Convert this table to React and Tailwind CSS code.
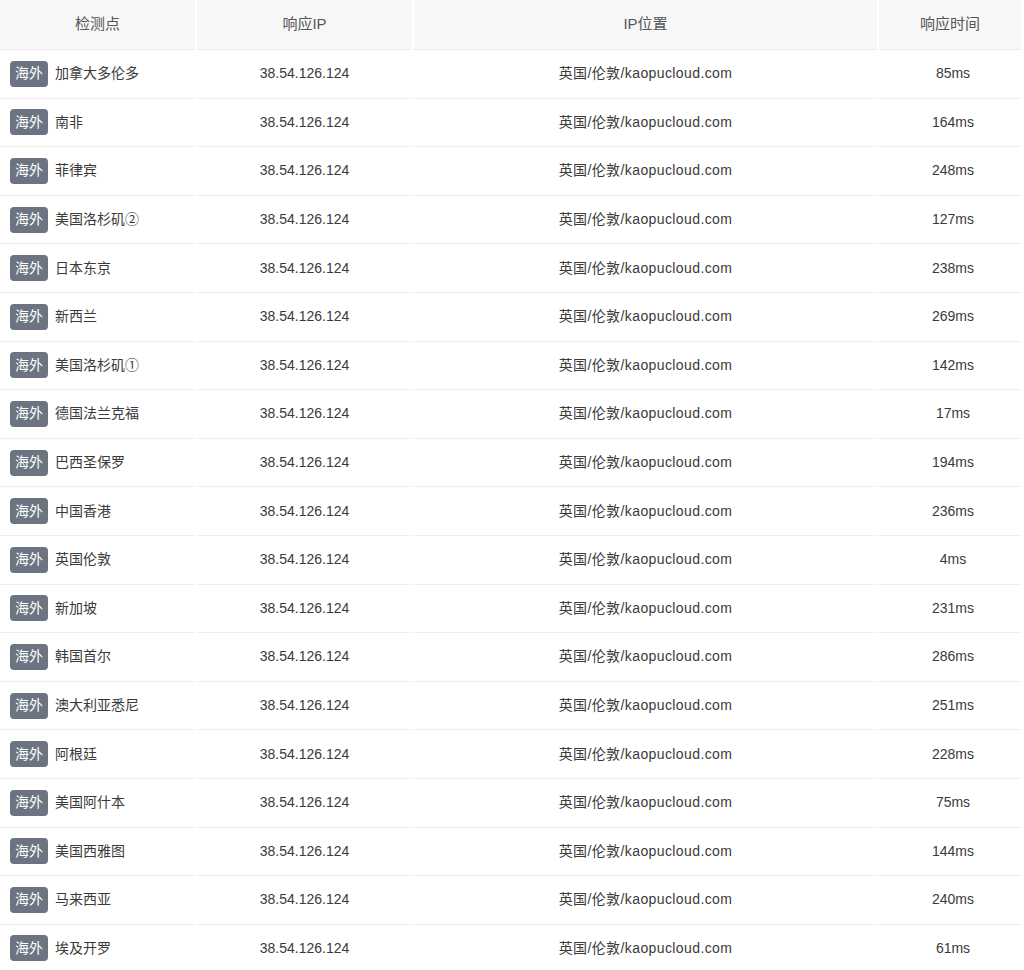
const ROWS = [
  ["加拿大多伦多", "85ms"],
  ["南非", "164ms"],
  ["菲律宾", "248ms"],
  ["美国洛杉矶②", "127ms"],
  ["日本东京", "238ms"],
  ["新西兰", "269ms"],
  ["美国洛杉矶①", "142ms"],
  ["德国法兰克福", "17ms"],
  ["巴西圣保罗", "194ms"],
  ["中国香港", "236ms"],
  ["英国伦敦", "4ms"],
  ["新加坡", "231ms"],
  ["韩国首尔", "286ms"],
  ["澳大利亚悉尼", "251ms"],
  ["阿根廷", "228ms"],
  ["美国阿什本", "75ms"],
  ["美国西雅图", "144ms"],
  ["马来西亚", "240ms"],
  ["埃及开罗", "61ms"],
];

const GRID = "grid grid-cols-[195px_215px_463px_142px] gap-x-[2px]";

export default function App() {
  return (
    <div
      className="w-[1024px] h-[970px] overflow-hidden bg-white text-[14px] text-[#3a3a3a]"
      style={{ fontFamily: '"Liberation Sans", "Noto Sans CJK SC", sans-serif' }}
    >
      <div className={`${GRID} h-[50px] text-[15px] text-[#555]`}>
        {["检测点", "响应IP", "IP位置", "响应时间"].map((h) => (
          <div key={h} className="flex items-center justify-center bg-[#f7f7f7] border-b border-[#ececec]">
            {h}
          </div>
        ))}
      </div>

      {ROWS.map(([name, ms]) => (
        <div key={name} className={`${GRID} h-[48.6px]`}>
          <div className="flex items-center gap-[7px] pl-[10px] border-b border-[#eeeeee]">
            <span className="flex h-[26px] w-[38px] items-center justify-center rounded-[4px] bg-[#6b7480] text-[14px] text-white">
              海外
            </span>
            <span>{name}</span>
          </div>
          <div className="flex items-center justify-center border-b border-[#eeeeee]">38.54.126.124</div>
          <div className="flex items-center justify-center border-b border-[#eeeeee] tracking-[0.4px]">
            英国/伦敦/kaopucloud.com
          </div>
          <div className="flex items-center justify-center border-b border-[#eeeeee] pl-[6px]">{ms}</div>
        </div>
      ))}
    </div>
  );
}
